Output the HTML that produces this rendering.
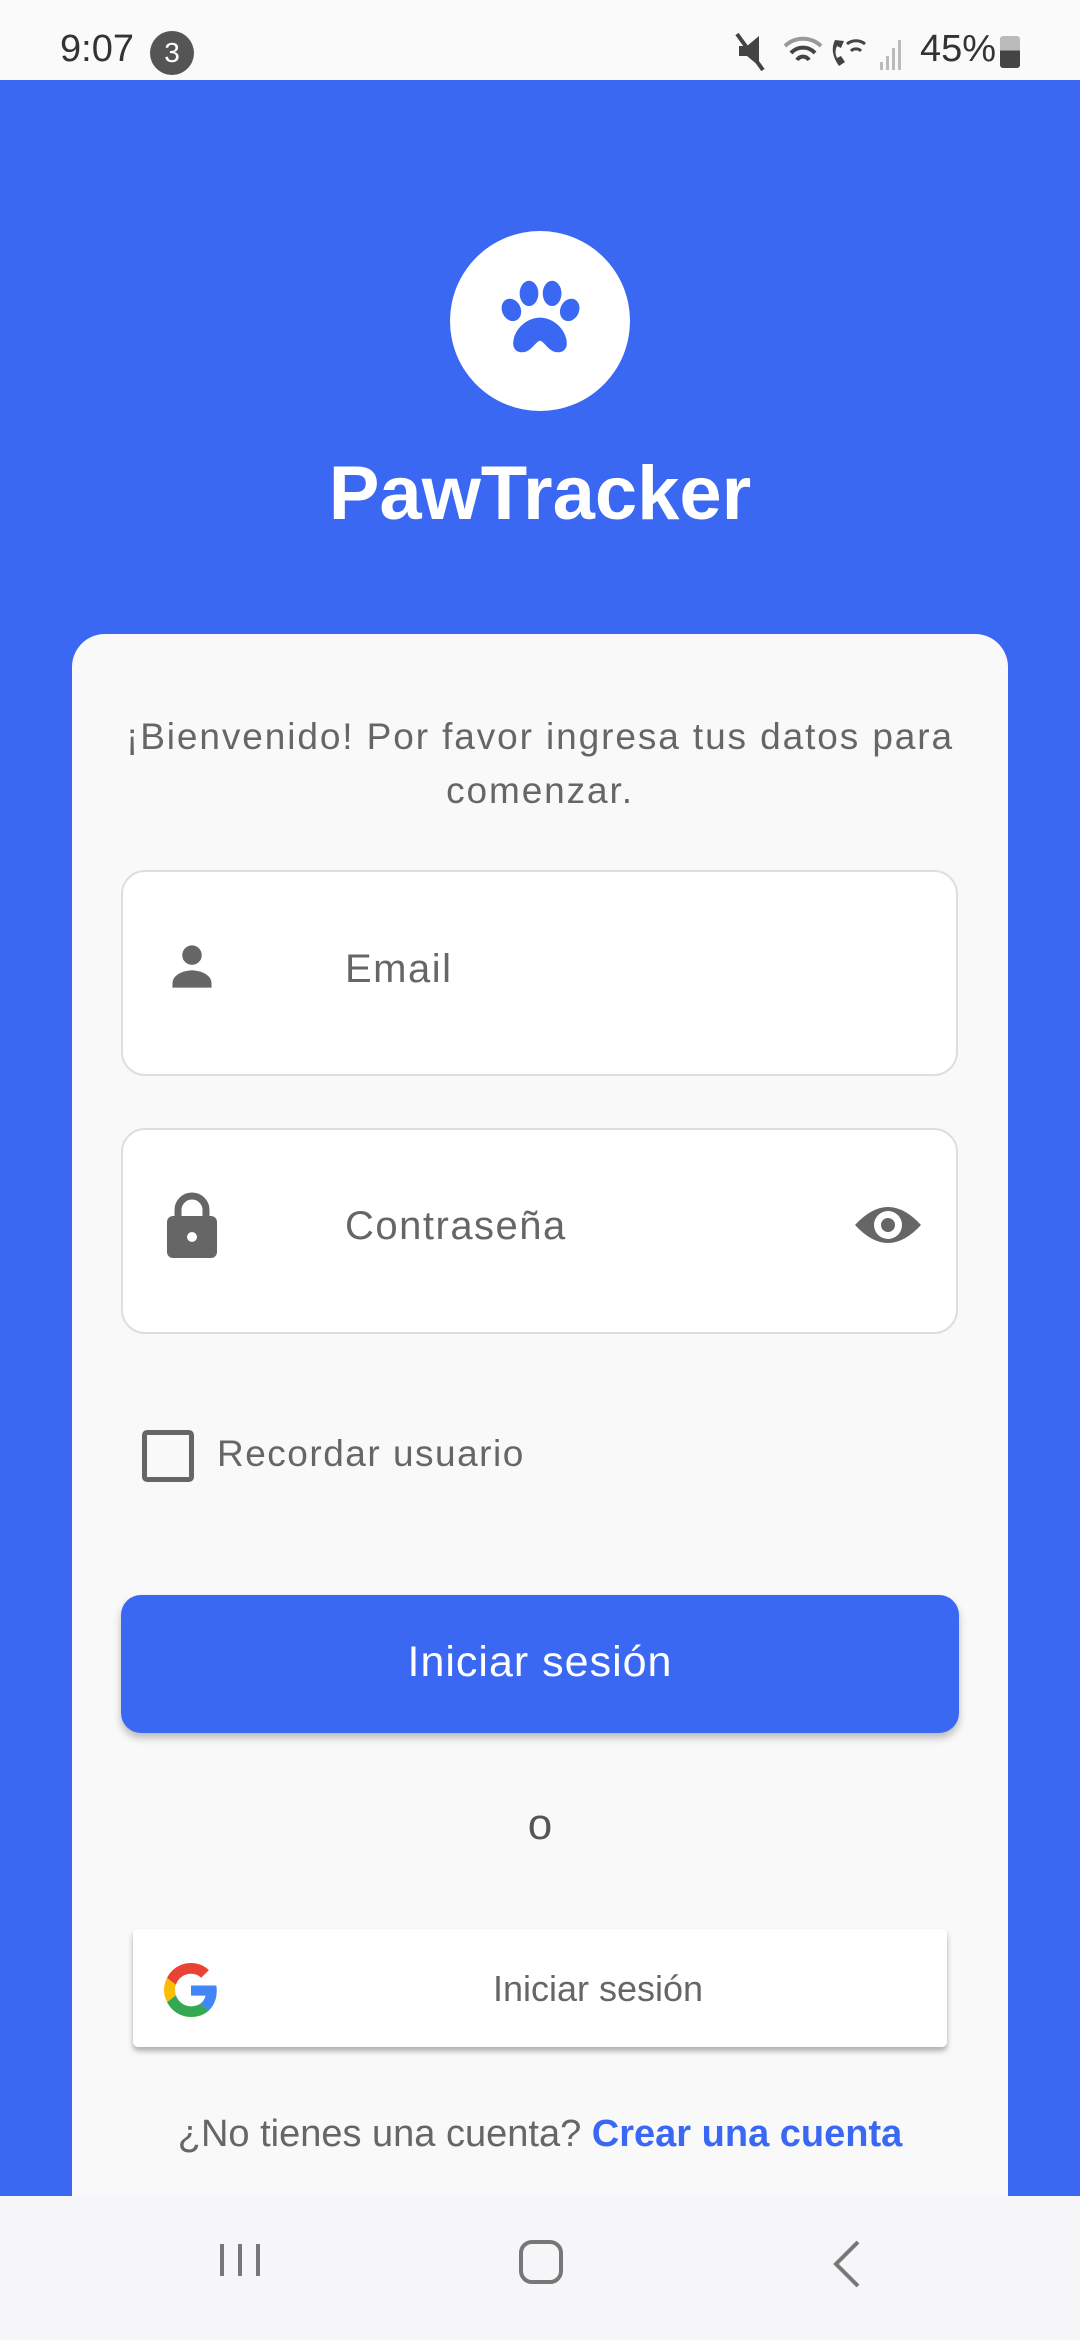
<!DOCTYPE html>
<html><head><meta charset="utf-8"><style>
*{box-sizing:border-box;margin:0;padding:0}
body{width:1080px;height:2340px;overflow:hidden;background:#3b68f2;font-family:"Liberation Sans","DejaVu Sans",sans-serif;position:relative}
.abs{position:absolute}
.status{left:0;top:0;width:1080px;height:80px;background:#fafafa}
.card{left:72px;top:634px;width:936px;height:1650px;background:#f9f9f9;border-radius:33px}
.field{left:121px;width:837px;height:206px;background:#fff;border:2px solid #dedede;border-radius:24px}
.ft{font-size:40px;color:#666;letter-spacing:1.5px}
.nav{left:0;top:2196px;width:1080px;height:144px;background:#f6f6f8}
</style></head><body>
<div class="abs status">
 <div class="abs" style="left:60px;top:28px;font-size:38px;color:#333">9:07</div>
 <div class="abs" style="left:150px;top:31px;width:44px;height:44px;border-radius:22px;background:#555;color:#fff;font-size:28px;text-align:center;line-height:44px">3</div>
 <svg class="abs" style="left:735px;top:30px" width="300" height="44" viewBox="0 0 300 44">
  <path d="M4 16h8l12-10v30l-12-10H4z" fill="#444"/><path d="M2 4l26 36" stroke="#444" stroke-width="4"/>
  <path d="M50 16a26 26 0 0 1 36 0" stroke="#999" stroke-width="4" fill="none"/><path d="M56 23a16 16 0 0 1 24 0M62 30a7 7 0 0 1 12 0" stroke="#444" stroke-width="4" fill="none"/>
  <path d="M100 10q-6 12 4 26l6-4-4-6-4 2q-3-6 0-12l4 2 3-7z" fill="#444"/><path d="M112 14a14 14 0 0 1 18 0M116 21a7 7 0 0 1 10 0" stroke="#444" stroke-width="3" fill="none"/>
  <rect x="145" y="32" width="3" height="8" fill="#bbb"/><rect x="151" y="26" width="3" height="14" fill="#bbb"/><rect x="157" y="18" width="3" height="22" fill="#bbb"/><rect x="163" y="10" width="3" height="30" fill="#bbb"/>
 </svg>
 <div class="abs" style="left:920px;top:28px;font-size:38px;color:#333">45%</div>
 <div class="abs" style="left:1000px;top:36px;width:20px;height:32px;border-radius:3px;background:linear-gradient(#bbb 45%,#444 45%)"></div>
</div>

<div class="abs" style="left:450px;top:231px;width:180px;height:180px;border-radius:90px;background:#fff"></div>
<svg class="abs" style="left:496px;top:278px" width="88" height="88" viewBox="0 0 80 80">
 <g fill="#3b68f2">
  <ellipse cx="14" cy="29" rx="8.5" ry="10.5" transform="rotate(-25 14 29)"/>
  <ellipse cx="30" cy="14" rx="8.5" ry="11.5"/>
  <ellipse cx="51" cy="14" rx="8.5" ry="11.5"/>
  <ellipse cx="67" cy="29" rx="8.5" ry="10.5" transform="rotate(25 67 29)"/>
  <path d="M40 36c-11 0-22 9-24 20-2 9 4 13 11 11 6-2 10-10 13-10s7 8 13 10c7 2 13-2 11-11-2-11-13-20-24-20z"/>
 </g>
</svg>
<div class="abs" style="left:0;top:450px;width:1080px;text-align:center;color:#fff;font-size:76px;font-weight:bold">PawTracker</div>

<div class="abs card"></div>
<div class="abs" style="left:90px;top:710px;width:900px;text-align:center;font-size:37px;line-height:54px;color:#666;letter-spacing:1.9px">¡Bienvenido! Por favor ingresa tus datos para comenzar.</div>

<div class="abs field" style="top:870px"></div>
<svg class="abs" style="left:166px;top:940px" width="52" height="52" viewBox="0 0 24 24"><circle cx="12" cy="7" r="4.5" fill="#666"/><path d="M3 22v-2c0-4 5-6 9-6s9 2 9 6v2z" fill="#666"/></svg>
<div class="abs ft" style="left:345px;top:947px">Email</div>

<div class="abs field" style="top:1128px"></div>
<svg class="abs" style="left:164px;top:1192px" width="56" height="68" viewBox="0 0 56 68"><path d="M14 26v-8a14 14 0 0 1 28 0v8" stroke="#666" stroke-width="7" fill="none"/><rect x="3" y="24" width="50" height="42" rx="6" fill="#666"/><circle cx="28" cy="45" r="5" fill="#fff"/></svg>
<div class="abs ft" style="left:345px;top:1204px">Contraseña</div>
<svg class="abs" style="left:853px;top:1201px" width="70" height="48" viewBox="0 0 70 48"><path d="M2 24Q35-12 68 24Q35 60 2 24z" fill="#666"/><circle cx="35" cy="24" r="14" fill="#fff"/><circle cx="35" cy="24" r="7" fill="#666"/></svg>

<div class="abs" style="left:142px;top:1430px;width:52px;height:52px;border:5px solid #666;border-radius:5px"></div>
<div class="abs" style="left:217px;top:1433px;font-size:37px;color:#666;letter-spacing:1.5px">Recordar usuario</div>

<div class="abs" style="left:121px;top:1595px;width:838px;height:138px;background:#3b68f2;border-radius:20px;box-shadow:0 5px 8px rgba(0,0,0,.25);color:#fff;font-size:43px;letter-spacing:1px;text-align:center;line-height:134px">Iniciar sesión</div>
<div class="abs" style="left:0;top:1800px;width:1080px;text-align:center;font-size:44px;color:#555">o</div>

<div class="abs" style="left:133px;top:1929px;width:814px;height:118px;background:#fff;border-radius:5px;box-shadow:0 4px 6px rgba(0,0,0,.3)"></div>
<svg class="abs" style="left:164px;top:1963px" width="54" height="54" viewBox="0 0 48 48">
 <path fill="#EA4335" d="M24 9.5c3.5 0 6.6 1.2 9.1 3.6l6.8-6.8C35.8 2.4 30.4 0 24 0 14.6 0 6.6 5.4 2.7 13.3l7.9 6.1C12.5 13.6 17.8 9.5 24 9.5z"/>
 <path fill="#4285F4" d="M46.9 24.5c0-1.6-.1-3.1-.4-4.5H24v9h12.9c-.6 3-2.3 5.5-4.8 7.2l7.7 6c4.5-4.2 7.1-10.3 7.1-17.7z"/>
 <path fill="#FBBC05" d="M10.5 28.6c-.5-1.5-.8-3-.8-4.6s.3-3.1.8-4.6l-7.9-6.1C1 16.5 0 20.1 0 24s1 7.5 2.7 10.7z"/>
 <path fill="#34A853" d="M24 48c6.5 0 11.9-2.1 15.9-5.8l-7.7-6c-2.2 1.5-5 2.3-8.2 2.3-6.2 0-11.5-4.1-13.4-9.8l-7.9 6.1C6.6 42.6 14.6 48 24 48z"/>
</svg>
<div class="abs" style="left:380px;top:1968px;width:436px;text-align:center;font-size:36px;color:#666">Iniciar sesión</div>

<div class="abs" style="left:0;top:2113px;width:1080px;text-align:center;font-size:38px;color:#666">¿No tienes una cuenta? <span style="color:#3b68f2;font-weight:bold">Crear una cuenta</span></div>

<div class="abs nav"></div>
<svg class="abs" style="left:0;top:2196px" width="1080" height="144">
 <g stroke="#777" stroke-width="4" fill="none">
  <path d="M222 48v32M240 48v32M258 48v32"/>
  <rect x="521" y="46" width="40" height="40" rx="11"/>
  <path d="M858 46l-22 22 22 22"/>
 </g>
</svg>
</body></html>
